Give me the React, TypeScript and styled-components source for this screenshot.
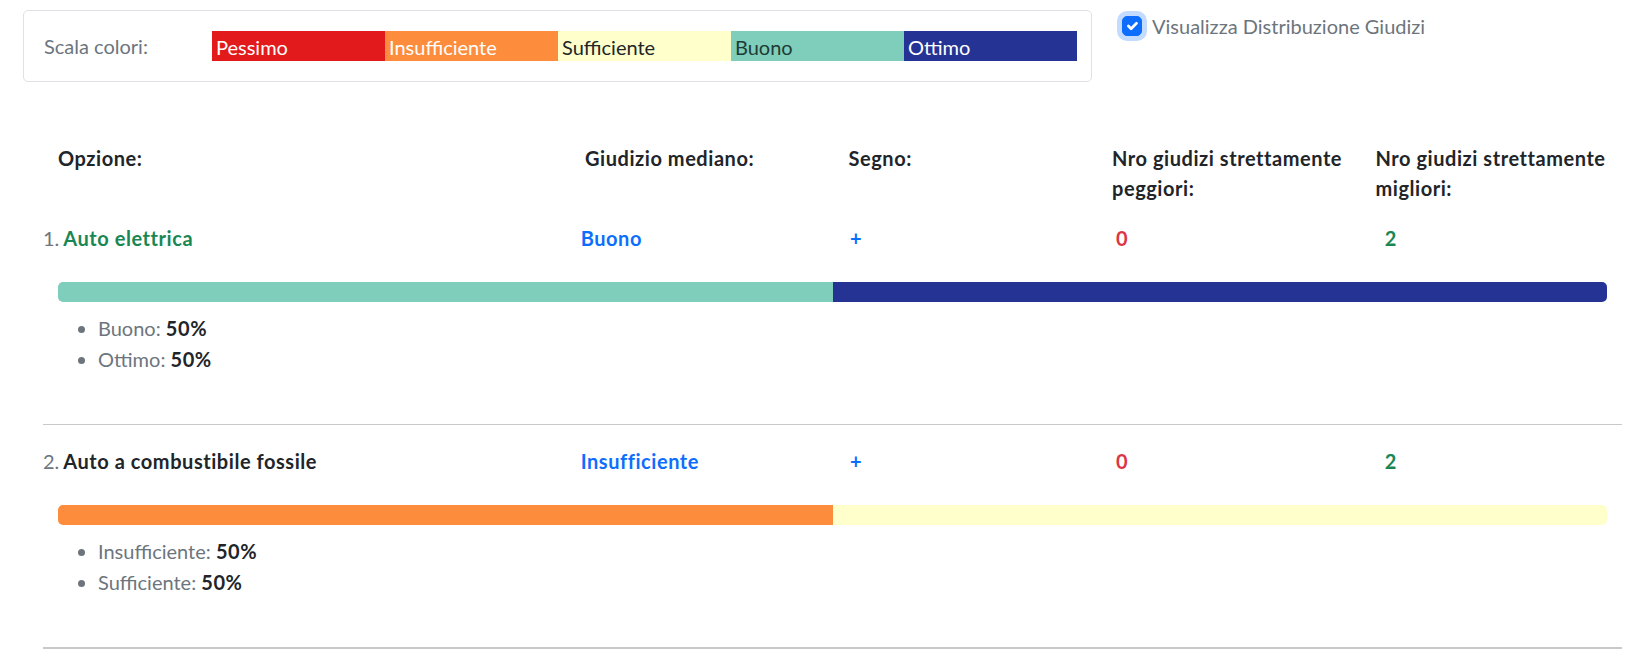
import styled, { createGlobalStyle } from "styled-components";

const GlobalStyle = createGlobalStyle`
  body {
    margin: 0;
    background: #fff;
    color: #212529;
    font-family: Lato, "Noto Sans", sans-serif;
    font-size: 20px;
    line-height: 1.5;
  }
`;

const grades = [
  { name: "Pessimo", bg: "#e31a1c", fg: "#fff" },
  { name: "Insufficiente", bg: "#fd8d3c", fg: "#fff" },
  { name: "Sufficiente", bg: "#ffffcc", fg: "#212529" },
  { name: "Buono", bg: "#7fcdbb", fg: "#1d3b34" },
  { name: "Ottimo", bg: "#253494", fg: "#fff" },
];

const colorOf = (name: string) => grades.find((g) => g.name === name)?.bg ?? "#ccc";

type Option = {
  name: string;
  nameColor: string;
  median: string;
  sign: string;
  worse: number;
  better: number;
  distribution: { grade: string; pct: number }[];
};

const options: Option[] = [
  {
    name: "Auto elettrica",
    nameColor: "#198754",
    median: "Buono",
    sign: "+",
    worse: 0,
    better: 2,
    distribution: [
      { grade: "Buono", pct: 50 },
      { grade: "Ottimo", pct: 50 },
    ],
  },
  {
    name: "Auto a combustibile fossile",
    nameColor: "#212529",
    median: "Insufficiente",
    sign: "+",
    worse: 0,
    better: 2,
    distribution: [
      { grade: "Insufficiente", pct: 50 },
      { grade: "Sufficiente", pct: 50 },
    ],
  },
];

const Page = styled.div`
  padding: 10px 13px 0 23px;
`;

const TopRow = styled.div`
  display: flex;
  align-items: flex-start;
`;

const ScaleCard = styled.div`
  display: flex;
  align-items: center;
  box-sizing: border-box;
  width: 1069px;
  padding: 20px 14px 20px 20px;
  border: 1px solid #dee2e6;
  border-radius: 5px;
`;

const ScaleLabel = styled.span`
  width: 168px;
  color: #6c757d;
`;

const ScaleBar = styled.div`
  display: flex;
`;

const ScaleSegment = styled.span<{ $bg: string; $fg: string }>`
  box-sizing: border-box;
  width: 173px;
  height: 30px;
  padding: 1px 0 0 4px;
  background: ${(p) => p.$bg};
  color: ${(p) => p.$fg};
`;

const Check = styled.label`
  display: flex;
  gap: 10px;
  margin-left: 30px;
  padding-top: 1px;
  color: #6c757d;
`;

const CheckBox = styled.span`
  display: flex;
  align-items: center;
  justify-content: center;
  box-sizing: border-box;
  width: 20px;
  height: 20px;
  margin-top: 5px;
  border-radius: 5px;
  background: #0d6efd;
  border: 1px solid #0d6efd;
  box-shadow: 0 0 0 5px rgba(13, 110, 253, 0.25);
`;

const Table = styled.div`
  width: 1579px;
  margin: 61px 0 0 20px;
`;

const HeaderGrid = styled.div`
  display: grid;
  grid-template-columns: 527px 263.5px 263.5px 263.5px 1fr;
  margin-bottom: 19px;
  font-weight: 700;
  letter-spacing: 0.55px;
`;

const HeaderCell = styled.div`
  padding: 0 15px;
  white-space: nowrap;
`;

const OptionBlock = styled.section``;

const RowLine = styled.div`
  display: grid;
  grid-template-columns: 537.7px 269.3px 266px 268.7px 1fr;
  padding-top: 1px;
  margin-bottom: -1px;
  font-weight: 700;
  letter-spacing: 0.55px;
  white-space: nowrap;
`;

const Index = styled.span`
  display: inline-block;
  width: 20.3px;
  color: #6c757d;
  font-weight: 400;
  letter-spacing: 0;
`;

const Value = styled.span<{ $color: string }>`
  color: ${(p) => p.$color};
`;

const DistributionBar = styled.div`
  display: flex;
  height: 20px;
  margin: 30px 15px 0;
  border-radius: 5px;
  overflow: hidden;
`;

const BarPart = styled.div<{ $bg: string; $share: number }>`
  flex: ${(p) => p.$share};
  background: ${(p) => p.$bg};
`;

const DistList = styled.ul`
  margin: 11px 15px 0;
  padding-left: 40px;
  color: #6c757d;
  line-height: 31px;
`;

const Pct = styled.strong`
  color: #212529;
  letter-spacing: 0.55px;
`;

const Divider = styled.hr<{ $thick?: boolean }>`
  margin: 48.7px 0 20.3px;
  border: 0;
  border-top: ${(p) => (p.$thick ? 2 : 1)}px solid #c8c9ca;
`;

export default function App() {
  return (
    <Page>
      <GlobalStyle />
      <TopRow>
        <ScaleCard>
          <ScaleLabel>Scala colori:</ScaleLabel>
          <ScaleBar>
            {grades.map((g) => (
              <ScaleSegment key={g.name} $bg={g.bg} $fg={g.fg}>
                {g.name}
              </ScaleSegment>
            ))}
          </ScaleBar>
        </ScaleCard>
        <Check>
          <CheckBox>
            <svg width="20" height="20" viewBox="0 0 20 20">
              <path
                d="m6 10 3 3 6-6"
                fill="none"
                stroke="#fff"
                strokeWidth="3"
                strokeLinecap="round"
                strokeLinejoin="round"
              />
            </svg>
          </CheckBox>
          Visualizza Distribuzione Giudizi
        </Check>
      </TopRow>

      <Table>
        <HeaderGrid>
          <HeaderCell>Opzione:</HeaderCell>
          <HeaderCell>Giudizio mediano:</HeaderCell>
          <HeaderCell>Segno:</HeaderCell>
          <HeaderCell>
            Nro giudizi strettamente
            <br />
            peggiori:
          </HeaderCell>
          <HeaderCell>
            Nro giudizi strettamente
            <br />
            migliori:
          </HeaderCell>
        </HeaderGrid>

        {options.map((o, i) => (
          <OptionBlock key={o.name}>
            <RowLine>
              <span>
                <Index>{i + 1}.</Index>
                <Value $color={o.nameColor}>{o.name}</Value>
              </span>
              <Value $color="#0d6efd">{o.median}</Value>
              <Value $color="#0d6efd">{o.sign}</Value>
              <Value $color="#dc3545">{o.worse}</Value>
              <Value $color="#198754">{o.better}</Value>
            </RowLine>
            <DistributionBar>
              {o.distribution.map((d) => (
                <BarPart key={d.grade} $bg={colorOf(d.grade)} $share={d.pct} />
              ))}
            </DistributionBar>
            <DistList>
              {o.distribution.map((d) => (
                <li key={d.grade}>
                  {d.grade}: <Pct>{d.pct}%</Pct>
                </li>
              ))}
            </DistList>
            <Divider $thick={i === options.length - 1} />
          </OptionBlock>
        ))}
      </Table>
    </Page>
  );
}
